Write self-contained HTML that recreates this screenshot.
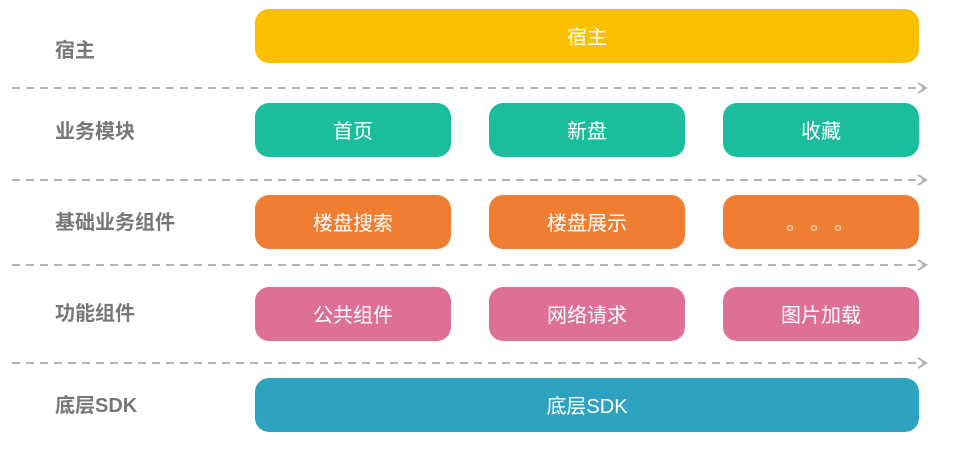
<!DOCTYPE html><html><head><meta charset="utf-8"><style>
body{margin:0;width:959px;height:459px;background:#fff;position:relative;overflow:hidden;font-family:"Liberation Sans","Noto Sans CJK SC",sans-serif}
.l{position:absolute;left:55px;font-size:20px;font-weight:bold;color:#777;line-height:24px}
.b{position:absolute;height:54px;border-radius:14px;color:#fff;font-size:20px;display:flex;align-items:center;justify-content:center;padding-bottom:2px;box-sizing:border-box}
.y{background:#fdc000}.g{background:#1cbd9c}.o{background:#ef7e33}.p{background:#de7095}.c{background:#2ea3c0}
svg{position:absolute;left:0;top:0}
</style></head><body>
<svg width="959" height="459"><g stroke="#b3b3b3" stroke-width="2" fill="none">
<line x1="12" y1="88" x2="925" y2="88" stroke-dasharray="8,6"/><polyline points="918,83 926,88 918,93"/>
<line x1="12" y1="180" x2="925" y2="180" stroke-dasharray="8,6"/><polyline points="918,175 926,180 918,185"/>
<line x1="12" y1="265" x2="925" y2="265" stroke-dasharray="8,6"/><polyline points="918,260 926,265 918,270"/>
<line x1="12" y1="363" x2="925" y2="363" stroke-dasharray="8,6"/><polyline points="918,358 926,363 918,368"/>
</g></svg>
<div class="l" style="top:39px">宿主</div>
<div class="l" style="top:120px">业务模块</div>
<div class="l" style="top:211px">基础业务组件</div>
<div class="l" style="top:302px">功能组件</div>
<div class="l" style="top:394px">底层SDK</div>
<div class="b y" style="left:255px;width:664px;top:9px">宿主</div>
<div class="b g" style="left:255px;width:196px;top:103px">首页</div>
<div class="b g" style="left:489px;width:196px;top:103px">新盘</div>
<div class="b g" style="left:723px;width:196px;top:103px">收藏</div>
<div class="b o" style="left:255px;width:196px;top:195px">楼盘搜索</div>
<div class="b o" style="left:489px;width:196px;top:195px">楼盘展示</div>
<div class="b o" style="left:723px;width:196px;top:195px"></div>
<div class="b p" style="left:255px;width:196px;top:287px">公共组件</div>
<div class="b p" style="left:489px;width:196px;top:287px">网络请求</div>
<div class="b p" style="left:723px;width:196px;top:287px">图片加载</div>
<div class="b c" style="left:255px;width:664px;top:378px">底层SDK</div>
<svg width="959" height="459"><g stroke="#fbd6bd" stroke-width="1.3" fill="none">
<circle cx="790" cy="228" r="2.5"/><circle cx="814" cy="228" r="2.5"/><circle cx="838" cy="228" r="2.5"/></g></svg>
</body></html>
